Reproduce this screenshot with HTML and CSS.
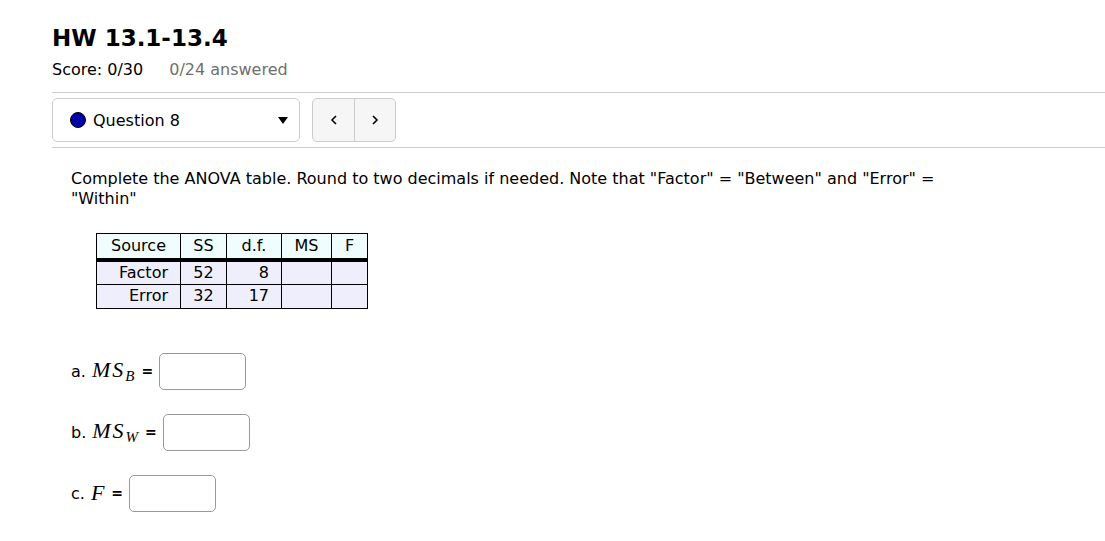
FILE: index.html
```html
<!DOCTYPE html>
<html>
<head>
<meta charset="utf-8">
<link rel="stylesheet" href="styles.css">
</head>
<body>
<div class="page">
  <h1 class="title">HW 13.1-13.4</h1>
  <div class="scoreline"><span class="score">Score: 0/30</span><span class="answered">0/24 answered</span></div>
  <div class="navbar">
    <div class="select">
      <span class="dot"></span>
      <span class="qlabel">Question 8</span>
      <span class="caret"></span>
    </div>
    <div class="arrows">
      <button class="arrow"><svg width="10" height="12" viewBox="0 0 10 12"><path d="M7 2 L3 6 L7 10" fill="none" stroke="#000" stroke-width="1.6"/></svg></button>
      <button class="arrow"><svg width="10" height="12" viewBox="0 0 10 12"><path d="M3 2 L7 6 L3 10" fill="none" stroke="#000" stroke-width="1.6"/></svg></button>
    </div>
  </div>
  <div class="question">
    <p class="prompt">Complete the ANOVA table. Round to two decimals if needed. Note that "Factor" = "Between" and "Error" = "Within"</p>
    <table class="anova">
      <colgroup><col class="c1"><col class="c2"><col class="c3"><col class="c4"><col class="c5"></colgroup>
      <thead>
        <tr><th>Source</th><th>SS</th><th>d.f.</th><th>MS</th><th>F</th></tr>
      </thead>
      <tbody>
        <tr><td class="r">Factor</td><td class="m">52</td><td class="r">8</td><td></td><td></td></tr>
        <tr><td class="r">Error</td><td class="m">32</td><td class="r">17</td><td></td><td></td></tr>
      </tbody>
    </table>
    <div class="answer a1"><span class="lbl">a.</span><span class="math">MS<sub>B</sub></span><span class="eq">=</span><span class="input"></span></div>
    <div class="answer a2"><span class="lbl">b.</span><span class="math">MS<sub>W</sub></span><span class="eq">=</span><span class="input"></span></div>
    <div class="answer a3"><span class="lbl">c.</span><span class="math">F</span><span class="eq">=</span><span class="input"></span></div>
  </div>
</div>
</body>
</html>
```
FILE: styles.css
```css
* { box-sizing: border-box; }
html, body { margin: 0; padding: 0; background: #fff; }
body { font-family: "DejaVu Sans", sans-serif; color: #000; font-size: 16px; }
.page { padding: 22px 0 0 52px; }
.title { font-size: 23px; font-weight: bold; margin: 0; line-height: 32px; }
.scoreline { margin-top: 5px; font-size: 16px; line-height: 22px; }
.score { margin-right: 26px; }
.answered { color: #6f6f6f; }
.navbar { margin-top: 11px; border-top: 1px solid #ccc; border-bottom: 1px solid #ccc; padding: 5px 0 5px 0; display: flex; gap: 12px; }
.select { width: 248px; height: 44px; border: 1px solid #ccc; border-radius: 5px; display: flex; align-items: center; padding-left: 17px; padding-right: 10px; }
.dot { width: 16px; height: 16px; border-radius: 50%; background: #0000a8; border: 1.5px solid #000; margin-right: 7px; }
.qlabel { flex: 1; font-size: 16px; }
.caret { width: 0; height: 0; border-left: 5px solid transparent; border-right: 5px solid transparent; border-top: 7px solid #000; margin-right: 1px; }
.arrows { display: flex; height: 44px; border: 1px solid #ccc; border-radius: 5px; background: #f6f6f6; overflow: hidden; }
.arrow { width: 41px; height: 42px; border: 0; background: transparent; display: flex; align-items: center; justify-content: center; padding: 0; }
.arrow + .arrow { border-left: 1px solid #ccc; }
.question { padding-left: 19px; padding-top: 21px; }
.prompt { margin: 0; width: 880px; line-height: 20px; font-size: 16px; }
.anova { border-collapse: collapse; table-layout: fixed; width: 271px; margin: 24px 0 0 25px; font-size: 16px; }
.anova th, .anova td { border: 1px solid #000; height: 24px; padding: 0 12px 0 0; line-height: 22px; }
.anova th { background: #effdfe; font-weight: normal; text-align: center; border-bottom: 4px solid #000; padding: 0; height: 26px; }
.anova td { background: #eeeefc; }
.c1 { width: 84px; } .c2 { width: 46px; } .c3 { width: 55px; } .c4 { width: 50px; } .c5 { width: 36px; }
.r { text-align: right; }
.anova td.m { text-align: center; padding: 0; }
.answer { display: flex; align-items: center; font-size: 16px; }
.lbl { margin-right: 6px; }
.eq { margin: 0 6px 0 5px; font-size: 14px; font-weight: bold; }
.a1 { margin-top: 44px; }
.a2 { margin-top: 24px; }
.a3 { margin-top: 24px; }
.math { font-family: "Liberation Serif", serif; font-style: italic; font-size: 22px; letter-spacing: 2px; }
.math sub { font-size: 15px; vertical-align: -4px; }
.input { display: inline-block; width: 87px; height: 37px; border: 1px solid #999; border-radius: 5px; }
```
